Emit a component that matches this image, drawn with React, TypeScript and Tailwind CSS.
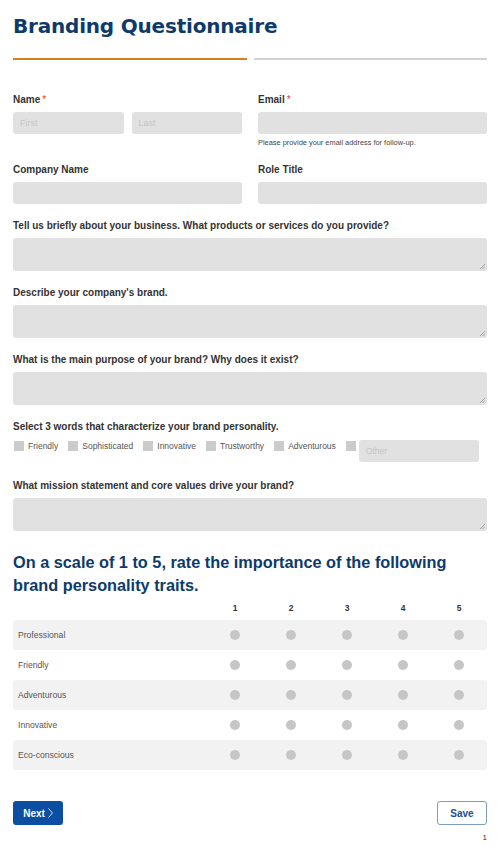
const traits = ['Professional', 'Friendly', 'Adventurous', 'Innovative', 'Eco-conscious'];
const words = ['Friendly', 'Sophisticated', 'Innovative', 'Trustworthy', 'Adventurous'];

function Label({ text, required }: { text: string; required?: boolean }) {
  return (
    <div className="h-[14px] text-[10px] leading-[14px] font-bold text-[#333]">
      {text}
      {required && <span className="ml-[2px] text-[#e03a3a] font-normal">*</span>}
    </div>
  );
}

function Input({ placeholder }: { placeholder?: string }) {
  return (
    <div className="mt-[5px] h-[22px] rounded-[3px] bg-[#e1e1e1] px-[7px] text-[9px] leading-[22px] text-[#c6c6c6]">
      {placeholder}
    </div>
  );
}

function Area() {
  return (
    <div className="relative mt-[5px] h-[33px] rounded-[3px] bg-[#e1e1e1]">
      <svg className="absolute right-[2px] bottom-[2px]" width="6" height="6" viewBox="0 0 6 6">
        <path d="M1 6L6 1M3.5 6L6 3.5" stroke="#888" strokeWidth="0.7" />
      </svg>
    </div>
  );
}

function Question({ text, className = '' }: { text: string; className?: string }) {
  return (
    <div className={className}>
      <Label text={text} />
      <Area />
    </div>
  );
}

export default function App() {
  return (
    <div className="min-h-[856px] w-[500px] bg-white px-[13px] pt-[12px] font-['Liberation_Sans',Arial,sans-serif]">
      <h1 className="h-[28px] text-[20px] leading-[28px] font-bold text-[#0d3a6b] font-['DejaVu_Sans',Verdana,sans-serif] tracking-[-0.2px]">
        Branding Questionnaire
      </h1>

      {/* progress */}
      <div className="mt-[18px] flex gap-[7px]">
        <div className="h-[2px] flex-1 bg-[#de7d1f]" />
        <div className="h-[2px] flex-1 bg-[#d2d2d2]" />
      </div>

      <div className="mt-[33px] grid grid-cols-2 gap-x-[16px] items-start">
        <div>
          <Label text="Name" required />
          <div className="flex gap-[8px]">
            <div className="flex-1"><Input placeholder="First" /></div>
            <div className="flex-1"><Input placeholder="Last" /></div>
          </div>
        </div>
        <div>
          <Label text="Email" required />
          <Input />
          <div className="mt-[4px] h-[10px] text-[7.4px] leading-[10px] text-[#444]">
            Please provide your email address for follow-up.
          </div>
        </div>
      </div>

      <div className="mt-[15px] grid grid-cols-2 gap-x-[16px]">
        <div>
          <Label text="Company Name" />
          <Input />
        </div>
        <div>
          <Label text="Role Title" />
          <Input />
        </div>
      </div>

      <Question className="mt-[15px]" text="Tell us briefly about your business. What products or services do you provide?" />
      <Question className="mt-[15px]" text="Describe your company's brand." />
      <Question className="mt-[15px]" text="What is the main purpose of your brand? Why does it exist?" />

      <div className="mt-[15px]">
        <Label text="Select 3 words that characterize your brand personality." />
        <div className="mt-[6px] flex items-start gap-[10px] pl-[1px]">
          {words.map((w) => (
            <div key={w} className="mt-[1px] flex items-center gap-[4px]">
              <div className="h-[10px] w-[10px] bg-[#cbcbcb]" />
              <span className="text-[8.5px] leading-[10px] text-[#555]">{w}</span>
            </div>
          ))}
          <div className="flex items-start gap-[3px]">
            <div className="mt-[1px] h-[10px] w-[10px] bg-[#cbcbcb]" />
            <div className="h-[22px] w-[120px] rounded-[3px] bg-[#e1e1e1] px-[7px] text-[8.5px] leading-[22px] text-[#c6c6c6]">
              Other
            </div>
          </div>
        </div>
      </div>

      <Question className="mt-[17px]" text="What mission statement and core values drive your brand?" />

      <h2 className="mt-[20px] text-[16.3px] leading-[23px] font-bold text-[#0d3a6b]">
        On a scale of 1 to 5, rate the importance of the following brand personality traits.
      </h2>

      {/* rating grid */}
      <div className="mt-[5px]">
        <div className="flex h-[12px] text-[8.5px] leading-[12px] font-bold text-[#333]">
          <div className="w-[194px]" />
          {[1, 2, 3, 4, 5].map((n) => (
            <div key={n} className="flex-1 text-center">{n}</div>
          ))}
        </div>
        <div className="mt-[6px]">
          {traits.map((t, i) => (
            <div
              key={t}
              className={`flex h-[30px] items-center rounded-[3px] ${i % 2 === 0 ? 'bg-[#f2f2f2]' : 'bg-white'}`}
            >
              <div className="w-[194px] pl-[5px] text-[8.6px] text-[#555]">{t}</div>
              {[1, 2, 3, 4, 5].map((n) => (
                <div key={n} className="flex flex-1 justify-center">
                  <div className="h-[10px] w-[10px] rounded-full bg-[#c6c6c6]" />
                </div>
              ))}
            </div>
          ))}
        </div>
      </div>

      <div className="mt-[31px] flex justify-between">
        <button className="flex h-[24px] w-[50px] items-center justify-center gap-[3px] rounded-[3px] bg-[#0b4ea2] text-[10px] font-bold text-white">
          Next
          <svg width="5" height="10" viewBox="0 0 5 10">
            <path d="M0.5 0.5L4.5 5L0.5 9.5" fill="none" stroke="#fff" strokeWidth="0.8" />
          </svg>
        </button>
        <button className="h-[24px] w-[50px] rounded-[3px] border border-[#7f9cc6] bg-white text-[10px] font-bold text-[#1b4e92]">
          Save
        </button>
      </div>
      <div className="mt-[8px] text-right text-[8px] leading-[10px] text-[#333]">1</div>
    </div>
  );
}
